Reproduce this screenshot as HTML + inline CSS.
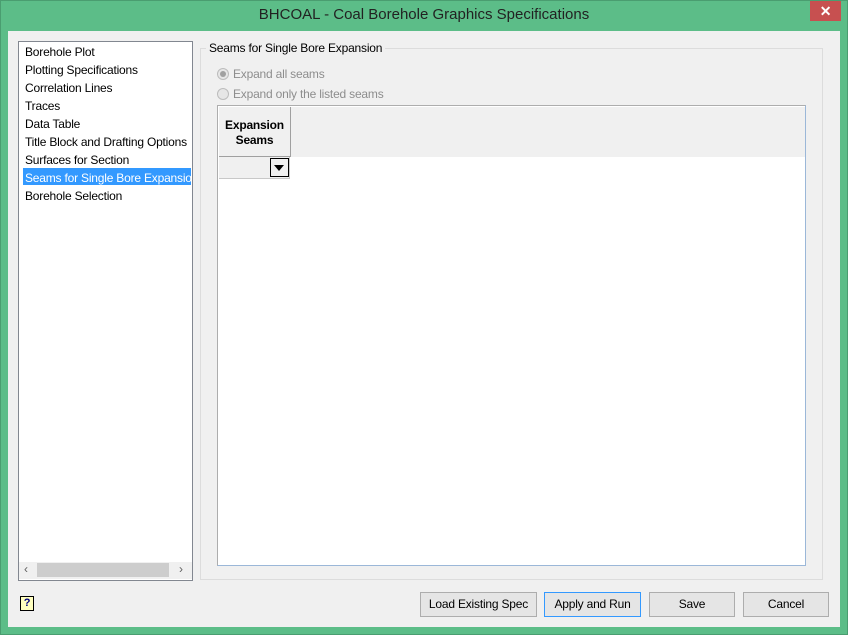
<!DOCTYPE html><html><head><style>
body{margin:0;width:848px;height:635px;background:#5cbd88;font-family:"Liberation Sans",sans-serif;font-size:12px;letter-spacing:-0.2px;position:relative;overflow:hidden}
div{position:absolute;box-sizing:border-box}
.t{white-space:nowrap}
.btn{top:592px;height:25px;border:1px solid #adadad;background:#e5e5e5;text-align:center;line-height:23px;color:#000}
</style></head><body>
<div style="left:0;top:0;width:848px;height:635px;border:1px solid #4a9d70"></div>
<div class="t" style="left:0;width:848px;top:6px;text-align:center;font-size:15px;color:#222;letter-spacing:0">BHCOAL - Coal Borehole Graphics Specifications</div>
<div style="left:810px;top:1px;width:31px;height:20px;background:#c75050;color:#fff;text-align:center;font-size:14px;line-height:20px;font-weight:bold">✕</div>
<div style="left:8px;top:31px;width:832px;height:596px;background:#f0f0f0"></div>
<div style="left:18px;top:41px;width:175px;height:540px;background:#fff;border:1px solid #828790"></div>
<div style="left:23px;top:168px;width:168px;height:17px;background:#3399ff"></div>
<div class="t" style="left:25px;top:43px;line-height:18px;width:166px;overflow:hidden">Borehole Plot<br>Plotting Specifications<br>Correlation Lines<br>Traces<br>Data Table<br>Title Block and Drafting Options<br>Surfaces for Section<br><span style="color:#fff">Seams for Single Bore Expansion</span><br>Borehole Selection</div>
<div style="left:19px;top:562px;width:173px;height:17px;background:#f0f0f0"></div>
<div style="left:37px;top:563px;width:132px;height:14px;background:#cdcdcd"></div>
<div class="t" style="left:24px;top:562px;color:#606060">‹</div>
<div class="t" style="left:179px;top:562px;color:#606060">›</div>
<div style="left:200px;top:48px;width:623px;height:532px;border:1px solid #dcdcdc"></div>
<div class="t" style="left:206px;top:41px;background:#f0f0f0;padding:0 3px">Seams for Single Bore Expansion</div>
<div style="left:217px;top:68px;width:12px;height:12px;border-radius:50%;border:1px solid #bcbcbc;background:#e6e6e6"></div>
<div style="left:220px;top:71px;width:6px;height:6px;border-radius:50%;background:#a0a0a0"></div>
<div class="t" style="left:233px;top:67px;color:#8d8d8d">Expand all seams</div>
<div style="left:217px;top:88px;width:12px;height:12px;border-radius:50%;border:1px solid #bcbcbc;background:#e6e6e6"></div>
<div class="t" style="left:233px;top:87px;color:#8d8d8d">Expand only the listed seams</div>
<div style="left:217px;top:105px;width:589px;height:461px;border:1px solid #9bb7d8;background:#fff;border-top-color:#adadad;border-left-color:#adadad"></div>
<div style="left:219px;top:107px;width:586px;height:50px;background:#f0f0f0"></div>
<div style="left:219px;top:107px;width:72px;height:50px;border:1px solid #a0a0a0;border-top:none;border-left:none;text-align:center;font-weight:bold;line-height:15px;padding-top:11px">Expansion<br>Seams</div>
<div style="left:219px;top:157px;width:71px;height:22px;background:#f0f0f0;border-right:1px solid #c8c8c8;border-bottom:1px solid #c8c8c8"></div>
<div style="left:270px;top:158px;width:19px;height:19px;border:1px solid #000;background:#f0f0f0"></div>
<div style="left:274px;top:165px;width:0;height:0;border-left:5px solid transparent;border-right:5px solid transparent;border-top:6px solid #000"></div>
<div style="left:20px;top:596px;width:14px;height:15px;border:1px solid #000;background:#ffffc0;font-size:11px;font-weight:bold;text-align:center;line-height:13px;color:#000080">?</div>
<div class="btn" style="left:420px;width:117px">Load Existing Spec</div>
<div class="btn" style="left:544px;width:97px;border-color:#3399ff">Apply and Run</div>
<div class="btn" style="left:649px;width:86px">Save</div>
<div class="btn" style="left:743px;width:86px">Cancel</div>
</body></html>
